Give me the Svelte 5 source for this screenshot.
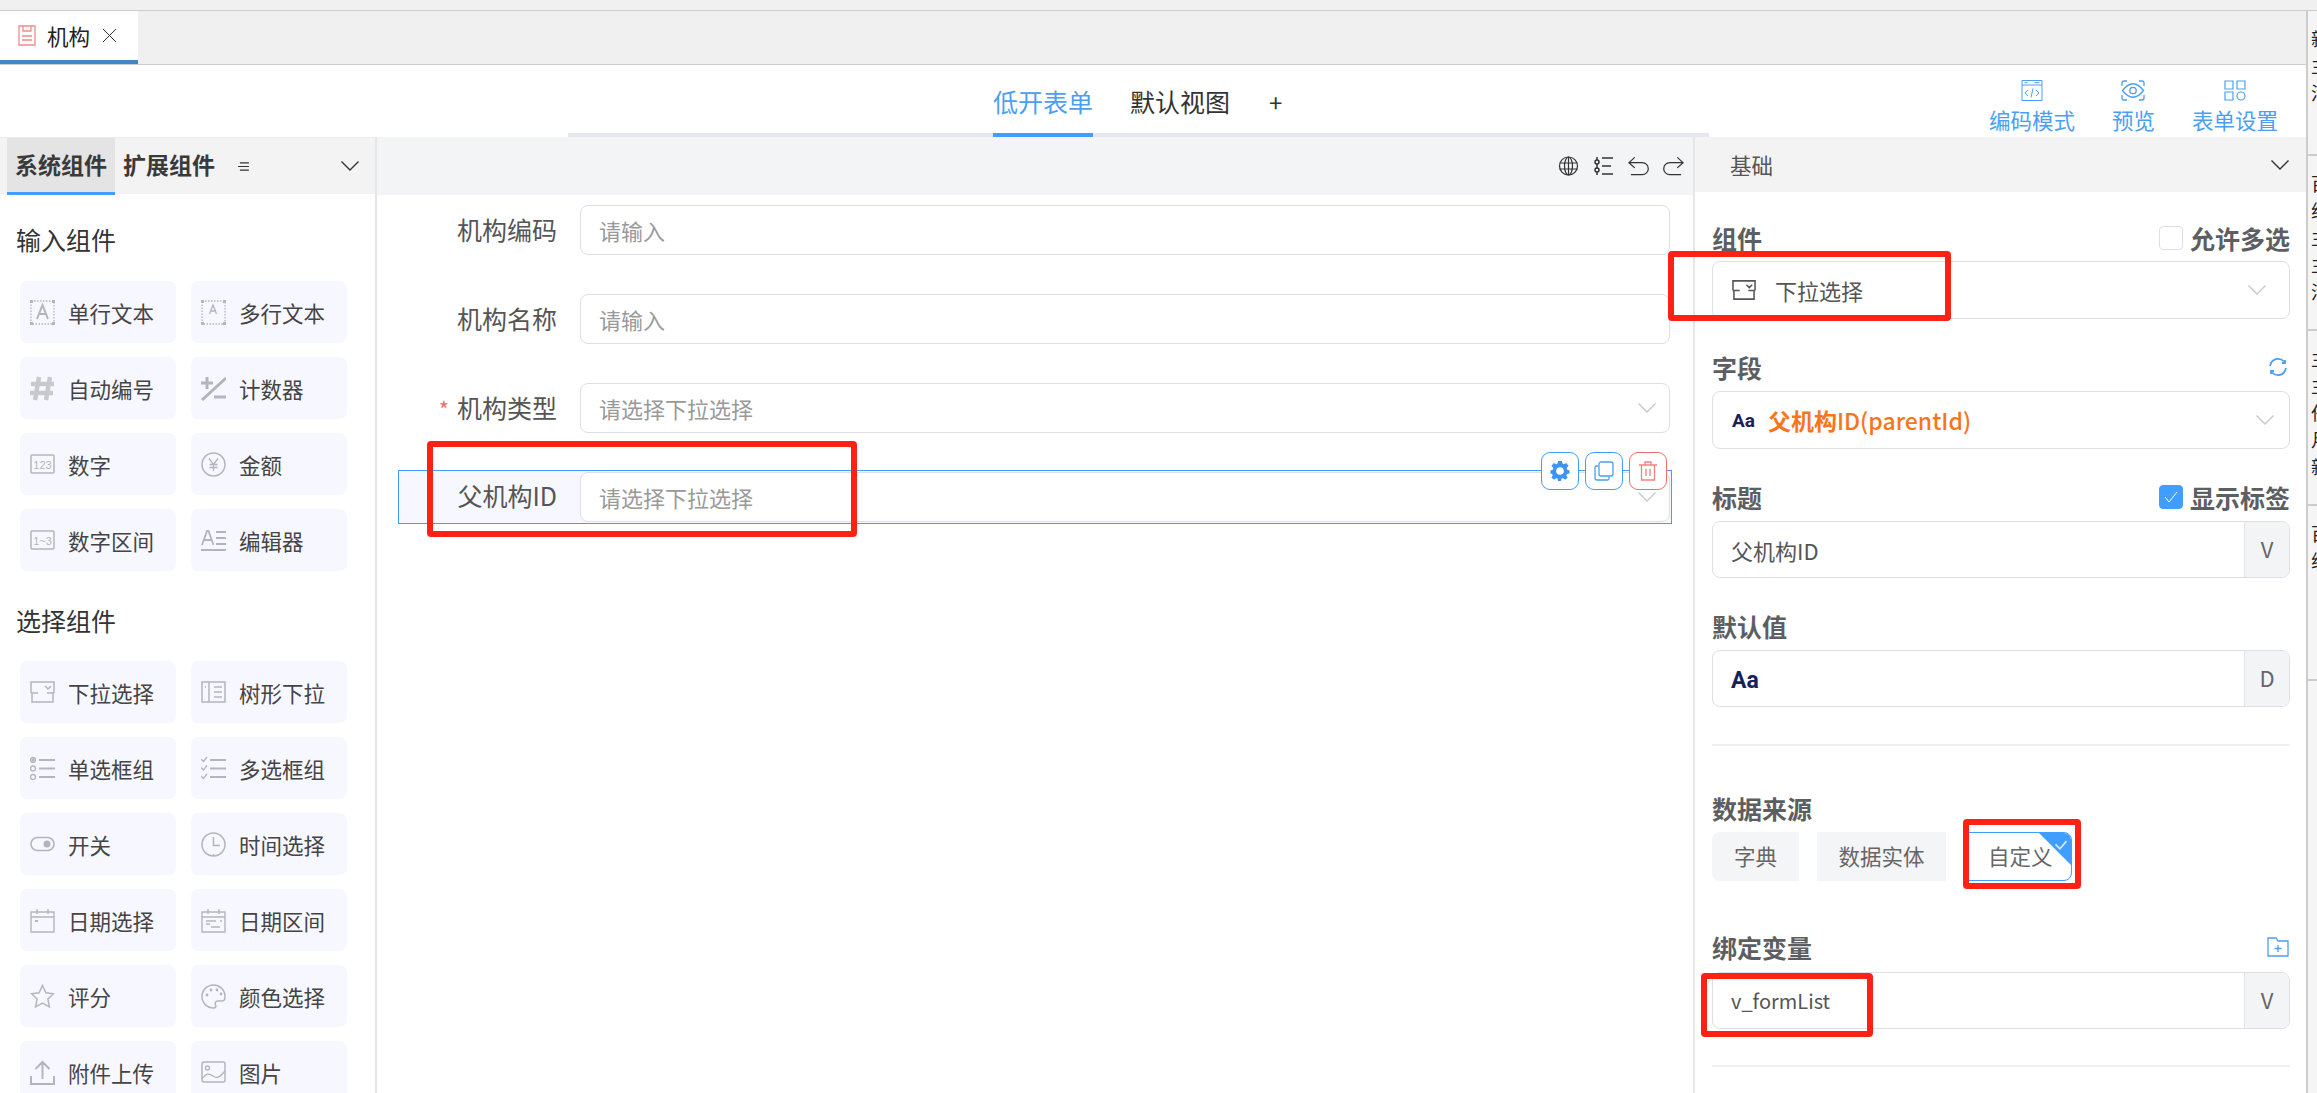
<script>
  const inputComps = [
    ['单行文本', 'text'], ['多行文本', 'textarea'], ['自动编号', 'hash'], ['计数器', 'counter'],
    ['数字', 'num'], ['金额', 'yen'], ['数字区间', 'range'], ['编辑器', 'editor']
  ];
  const selectComps = [
    ['下拉选择', 'select'], ['树形下拉', 'tree'], ['单选框组', 'radio'], ['多选框组', 'check'],
    ['开关', 'toggle'], ['时间选择', 'clock'], ['日期选择', 'date'], ['日期区间', 'daterange'],
    ['评分', 'star'], ['颜色选择', 'palette'], ['附件上传', 'upload'], ['图片', 'image']
  ];
  const rows = [
    { label: '机构编码', hint: '请输入' },
    { label: '机构名称', hint: '请输入' },
    { label: '机构类型', hint: '请选择下拉选择', required: true, arrow: true },
    { label: '父机构ID', hint: '请选择下拉选择', arrow: true, active: true }
  ];
  const stripCells = [
    ['新', '主', '活'],
    ['百', '组', '主', '主', '活'],
    ['主', '主', '任', '月', '新'],
    ['百', '组']
  ];
</script>

{#snippet chevron(cls)}
  <svg class={cls} viewBox="0 0 20 12" fill="none" stroke="currentColor" stroke-width="1.4"><path d="M1.5 1.5 10 10l8.500-8.500" /></svg>
{/snippet}

{#snippet compIcon(name)}
  <svg class="comp-icon" viewBox="0 0 25 25" fill="none" stroke="#b4b5ba" stroke-width="1.3">
    {#if name === 'text' || name === 'textarea'}
      <rect x="1" y="1" width="23" height="23" stroke-dasharray="1.500 1.500" />
      <path d="M0 0h3v3H0zM22 0h3v3h-3zM0 22h3v3H0zM22 22h3v3h-3z" fill="#b4b5ba" stroke="none" />
      {#if name === 'text'}
        <path d="M7 19 12.500 5 18 19M9 14h7" stroke-width="2" />
      {:else}
        <path d="M8.500 14 12 5l3.500 9M10 11h5" />
      {/if}
    {:else if name === 'hash'}
      <path d="M9 1 5 24M20 1l-4 23M1 8h23M0 17h23" stroke="#c8c9cd" stroke-width="4.500" />
    {:else if name === 'counter'}
      <path d="M0 7h12M6 1v12M1 24 25 2M13 21h12" stroke="#b4b5ba" stroke-width="3" />
    {:else if name === 'num' || name === 'range'}
      <rect x="1" y="3" width="23" height="18" rx="1" stroke-width="1.500" />
      <text x="12.500" y="16.500" text-anchor="middle" class="icon-label" stroke="none" fill="#b4b5ba">{name === 'num' ? '123' : '1~3'}</text>
    {:else if name === 'yen'}
      <circle cx="12.500" cy="12.500" r="11.500" stroke-width="1.500" />
      <path d="M8 6.500l4.500 6 4.500-6M12.500 12.500V19M8.500 12.500h8M8.500 15.500h8" />
    {:else if name === 'editor'}
      <path d="M1 17 6 3h1.500l5 14M3 12h8" stroke-width="1.800" />
      <path d="M15 4h10M15 10h10M15 16h10M0 22h25" stroke-width="2" />
    {:else if name === 'select'}
      <path d="M1 13V2h23v11M1 13h7M17 13h7M2 13v9h21v-9M15 6l3 3 3-3" stroke-width="1.500" />
    {:else if name === 'tree'}
      <rect x="1" y="2" width="23" height="20" stroke-width="1.500" />
      <path d="M8 2v20M13 7h8M13 12h8M13 17h8M4 7h1" stroke-width="1.500" />
    {:else if name === 'radio'}
      <circle cx="3" cy="4" r="2.500" /><circle cx="3" cy="12.500" r="2.500" /><circle cx="3" cy="21" r="2.500" />
      <circle cx="3" cy="4" r="1" fill="#b4b5ba" />
      <path d="M9 4h16M9 12.500h16M9 21h16" stroke-width="1.800" />
    {:else if name === 'check'}
      <path d="M0 3l2.500 2.500L6 1M0 11.500 2.500 14 6 9.500M0 20l2.500 2.500L6 18" />
      <path d="M9 4h16M9 12.500h16M9 21h16" stroke-width="1.800" />
    {:else if name === 'toggle'}
      <rect x="1" y="5.500" width="23" height="13" rx="6.500" stroke-width="1.600" />
      <circle cx="17" cy="12" r="3.500" fill="#b4b5ba" stroke="none" />
    {:else if name === 'clock'}
      <circle cx="12.500" cy="12.500" r="11.500" stroke-width="1.500" />
      <path d="M12.500 5v8.500H19M12.500 22v2M1 12.500h1" stroke-width="1.500" />
    {:else if name === 'date' || name === 'daterange'}
      <path d="M1 4h23v20H1zM1 9h23M7 1v5M18 1v5" stroke-width="1.400" />
      {#if name === 'date'}
        <path d="M5 13h3" stroke-width="2" />
      {:else}
        <path d="M5 13h10M10 19h9M5 16h4M19 13h2" />
      {/if}
    {:else if name === 'star'}
      <path d="M12.500 1.500l3.400 7.200 7.600 1-5.600 5.300 1.500 7.800-6.900-3.800-6.900 3.800 1.500-7.800L1.500 9.700l7.600-1z" stroke-width="1.500" />
    {:else if name === 'palette'}
      <path d="M12.500 1a11.500 11.500 0 1 0 0 23c2.500 0 2.800-1.800 2-3.200-1-1.800.2-3.800 2.300-3.800H21c2 0 3-1.500 3-4.500C24 5.500 18.500 1 12.500 1z" stroke-width="1.500" />
      <circle cx="6" cy="11" r="1.400" fill="#b4b5ba" stroke="none" /><circle cx="10" cy="6" r="1.400" fill="#b4b5ba" stroke="none" />
      <circle cx="16" cy="6" r="1.400" fill="#b4b5ba" stroke="none" /><circle cx="20" cy="10" r="1.400" fill="#b4b5ba" stroke="none" />
    {:else if name === 'upload'}
      <path d="M12.500 19V2M5.500 9l7-7 7 7M1 16v8h23v-8" stroke-width="2" />
    {:else if name === 'image'}
      <rect x="1" y="2" width="23" height="20" rx="2" stroke-width="1.500" />
      <circle cx="6.500" cy="8" r="2" /><path d="M1 19c4-6 7-6 11-3s7 1 12-5" />
    {/if}
  </svg>
{/snippet}

{#snippet compGrid(items)}
  <div class="comp-grid">
    {#each items as [name, icon]}
      <div class="comp-card">
        {@render compIcon(icon)}
        <span>{name}</span>
      </div>
    {/each}
  </div>
{/snippet}

<div class="page">
  <div class="top-strip"></div>
  <div class="app-row">
    <div class="main">
      <div class="tabbar">
        <div class="doc-tab">
          <svg class="doc-icon" viewBox="0 0 18 21" fill="none" stroke="#f28b8b" stroke-width="1.300"><path d="M1 1h16v19H1zM5 1v5h8V1M4 11h10M4 15h10" /></svg>
          <span>机构</span>
          <svg class="close" viewBox="0 0 15 15" fill="none" stroke="#333" stroke-width="1"><path d="M1 1l13 13M14 1 1 14" /></svg>
        </div>
      </div>

      <header class="header">
        <div class="views">
          <span class="view active">低开表单</span>
          <span class="view">默认视图</span>
          <span class="plus">+</span>
        </div>
        <div class="actions">
          <div class="action">
            <svg viewBox="0 0 21 21" fill="none" stroke="#4a9ff5" stroke-width="1"><path d="M.5.500h20v20H.500zM.5 5h20M3 2.700h3M13 2.700h5" /><path d="M6.500 10 3.500 13l3 3M14.500 10l3 3-3 3M11.500 8.500l-2 9" /></svg>
            <span>编码模式</span>
          </div>
          <div class="action">
            <svg viewBox="0 0 24 21" fill="none" stroke="#4a9ff5" stroke-width="1.300"><path d="M1 6V3q0-2 2-2h3M18 1h3q2 0 2 2v3M1 15v3q0 2 2 2h3M18 20h3q2 0 2-2v-3" /><path d="M1.500 10.500Q12-3 22.500 10.500 12 24 1.500 10.500z" /><circle cx="12" cy="10.500" r="3.200" /></svg>
            <span>预览</span>
          </div>
          <div class="action">
            <svg viewBox="0 0 22 21" fill="none" stroke="#4a9ff5" stroke-width="1.200"><path d="M1 1h8v8H1zM13 1h8v8h-8zM1 12h8v8H1z" /><circle cx="17" cy="16" r="4" /></svg>
            <span>表单设置</span>
          </div>
        </div>
      </header>

      <div class="body">
        <aside class="left">
          <div class="left-head">
            <span class="left-tab active">系统组件</span>
            <span class="left-tab">扩展组件</span>
            <svg class="menu" viewBox="0 0 12 10" fill="none" stroke="#333" stroke-width="1.300"><path d="M2 1h10M0 5h12M2 9h10" /></svg>
            {@render chevron('chev dark')}
          </div>
          <div class="left-body">
            <h3>输入组件</h3>
            {@render compGrid(inputComps)}
            <h3 class="second">选择组件</h3>
            {@render compGrid(selectComps)}
          </div>
        </aside>

        <section class="center">
          <div class="toolbar">
            <svg viewBox="0 0 20 20" fill="none" stroke="#333" stroke-width="1.200"><circle cx="10" cy="10" r="9" /><ellipse cx="10" cy="10" rx="4" ry="9" /><path d="M10 1v18M1 7h18M1 13h18" /></svg>
            <svg viewBox="0 0 21 20" fill="none" stroke="#333" stroke-width="1.500"><path d="M4 1v18M9 2h11M9 10h9M9 18h11" /><circle cx="4" cy="6" r="2" fill="#f3f4f5" /><circle cx="4" cy="14" r="2" fill="#f3f4f5" /></svg>
            <svg viewBox="0 0 22 20" fill="none" stroke="#333" stroke-width="1.300"><path d="M7 1 1 6.500 7 12M1 6.500h14a6 6 0 0 1 0 12.500H3" /></svg>
            <svg viewBox="0 0 22 20" fill="none" stroke="#333" stroke-width="1.300"><path d="M15 1l6 5.500-6 5.500M21 6.500H7a6 6 0 0 0 0 12.500h12" /></svg>
          </div>
          <div class="form">
            {#each rows as row}
              <div class="form-row" class:active={row.active}>
                <div class="form-label">
                  {#if row.required}<i>*</i>{/if}{row.label}
                </div>
                <div class="field">
                  <span>{row.hint}</span>
                  {#if row.arrow}{@render chevron('chev')}{/if}
                </div>
                {#if row.active}
                  <div class="row-tools">
                    <button aria-label="设置"><svg viewBox="0 0 20 21"><path fill="#3f93f2" fill-rule="evenodd" d="M8 0h4l.6 2.700 1.500.7L16.600 2l2.400 3.200-1.900 2 .3 1.600L20 10v3l-2.600.7-.7 1.500 1.400 2.300-2.800 2.300-2-1.800-1.600.5L11 21H8l-.6-2.500-1.600-.5-2 1.800L1 17.500l1.400-2.300-.7-1.500L0 13v-3l2.600-1.200.3-1.600-1.900-2L3.400 2l2.500 1.400 1.500-.7zM10 6.500a4 4 0 1 0 0 8 4 4 0 0 0 0-8z" /></svg></button>
                    <button aria-label="复制"><svg viewBox="0 0 20 20" fill="none" stroke="#4a9ff5" stroke-width="1.300"><rect x="5" y="1" width="14" height="14" rx="2" /><path d="M4 5H2.500Q1 5 1 6.500V17q0 2 2 2h10.500q1.500 0 1.500-1.500V16" /></svg></button>
                    <button class="danger" aria-label="删除"><svg viewBox="0 0 20 20" fill="none" stroke="#f28080" stroke-width="1.300"><path d="M1 4h18M7 4V1h6v3M3.500 4v15h13V4M8 8v7M12 8v7" /></svg></button>
                  </div>
                {/if}
              </div>
            {/each}
          </div>
        </section>

        <aside class="right">
          <div class="right-head">
            <span>基础</span>
            {@render chevron('chev dark')}
          </div>
          <div class="props">
            <div class="prop-title first">
              <b>组件</b>
              <label class="check"><span class="box"></span><b>允许多选</b></label>
            </div>
            <div class="field big roomy">
              <svg class="sel-icon" viewBox="0 0 25 25" fill="none" stroke="#555" stroke-width="1.600"><path d="M1 13V3h23v10M1 13h7M17 13h7M2 13v9h21v-9M15 7l3 3 3-3" /></svg>
              <span class="val">下拉选择</span>
              {@render chevron('chev')}
            </div>

            <div class="prop-title">
              <b>字段</b>
              <svg class="small-icon" viewBox="0 0 20 20" fill="none" stroke="#4a9ff5" stroke-width="1.800"><path d="M16 4.500A8 8 0 0 0 3 6l-1 3M4 15.500A8 8 0 0 0 17 14l1-3M14 6h3V3M6 14H3v3" /></svg>
            </div>
            <div class="field big">
              <span class="aa">Aa</span>
              <span class="orange"><b>父机构</b>ID(parentId)</span>
              {@render chevron('chev')}
            </div>

            <div class="prop-title">
              <b>标题</b>
              <label class="check"><span class="box on"><svg viewBox="0 0 14 12" fill="none" stroke="#fff" stroke-width="1"><path d="M1 6l4 5 8-10" /></svg></span><b>显示标签</b></label>
            </div>
            <div class="group">
              <span class="val">父机构ID</span>
              <span class="suffix">V</span>
            </div>

            <div class="prop-title">
              <b>默认值</b>
            </div>
            <div class="group">
              <span class="aa large">Aa</span>
              <span class="suffix">D</span>
            </div>
            <hr />

            <div class="prop-title source">
              <b>数据来源</b>
            </div>
            <div class="choices">
              <span class="choice">字典</span>
              <span class="choice wide">数据实体</span>
              <span class="choice on">自定义<em></em><svg viewBox="0 0 12 10" fill="none" stroke="#d5e9ff" stroke-width="1.500"><path d="M1 4l4 4 6-7" /></svg></span>
            </div>

            <div class="prop-title bind">
              <b>绑定变量</b>
              <svg class="small-icon folder" viewBox="0 0 22 20" fill="none" stroke="#4a9ff5" stroke-width="1.300"><path d="M1 1h8l2 3h10v15H1zM11 8v7M7.500 11.500h7" /></svg>
            </div>
            <div class="group">
              <span class="val latin">v_formList</span>
              <span class="suffix">V</span>
            </div>
            <hr class="last" />
          </div>
        </aside>
      </div>
    </div>

    <div class="side-strip">
      {#each stripCells as cell}
        <div class="strip-cell">
          {#each cell as ch}<span>{ch}</span>{/each}
        </div>
      {/each}
    </div>
  </div>

  <div class="mark m1"></div>
  <div class="mark m2"></div>
  <div class="mark m3"></div>
  <div class="mark m4"></div>
</div>

<style>
  :global(body) {
    margin: 0;
    background: #fff;
    font-family: "Noto Sans CJK SC", "Noto Sans", sans-serif;
    overflow: hidden;
  }

  .page {
    position: relative;
    width: 2317px;
    height: 1093px;
    overflow: hidden;
    color: #333;
  }

  .top-strip {
    height: 11px;
    box-sizing: border-box;
    background: #f0f0f0;
    border-bottom: 1px solid #ccc;
  }

  .app-row {
    display: flex;
    height: 1082px;
  }

  .main {
    width: 2306px;
    flex: none;
    display: flex;
    flex-direction: column;
  }

  .tabbar {
    height: 54px;
    box-sizing: border-box;
    background: #f0f0f0;
    border-bottom: 1px solid #ccc;
    flex: none;
  }

  .doc-tab {
    width: 138px;
    height: 53px;
    box-sizing: border-box;
    background: #fff;
    border-bottom: 4px solid #4285c9;
    display: flex;
    align-items: center;
    padding-left: 18px;
    font-size: 21.500px;
    color: #222;
  }

  .doc-icon {
    width: 18px;
    height: 21px;
    margin-right: 11px;
  }

  .close {
    width: 15px;
    height: 15px;
    margin-left: 12px;
  }

  .header {
    height: 72px;
    flex: none;
    position: relative;
    display: flex;
    box-sizing: border-box;
    padding-left: 568px;
  }

  .views {
    width: 1141px;
    height: 72px;
    box-sizing: border-box;
    border-bottom: 4px solid #e4e7ed;
    display: flex;
    padding-left: 425px;
  }

  .view {
    height: 72px;
    box-sizing: border-box;
    margin-right: 37px;
    font-size: 25px;
    line-height: 72px;
    color: #333;
  }

  .view.active {
    color: #4a9ff5;
    border-bottom: 4px solid #409eff;
  }

  .plus {
    font-size: 24px;
    line-height: 74px;
    margin-left: 2px;
  }

  .actions {
    position: absolute;
    right: 28px;
    top: 15px;
    display: flex;
    gap: 37px;
    color: #4a9ff5;
    font-size: 21.500px;
    line-height: 25px;
  }

  .action {
    display: flex;
    flex-direction: column;
    align-items: center;
    gap: 6px;
  }

  .action svg {
    height: 21px;
    width: 24px;
  }

  .body {
    flex: 1;
    display: flex;
    min-height: 0;
  }

  .left {
    width: 377px;
    flex: none;
    box-sizing: border-box;
    border-right: 2px solid #e6e6e6;
    overflow: hidden;
  }

  .left-head {
    height: 57px;
    background: #f3f3f3;
    display: flex;
    align-items: flex-start;
    padding-left: 7px;
    font-size: 23px;
    font-weight: 700;
    border-top: 1px solid #efeaea;
    box-sizing: border-box;
  }

  .left-tab {
    width: 108px;
    height: 57px;
    box-sizing: border-box;
    line-height: 53px;
    text-align: center;
    color: #3a3a3a;
  }

  .left-tab.active {
    background: #e4e4e4;
    border-bottom: 3px solid #409eff;
  }

  .menu {
    width: 11px;
    height: 9px;
    margin: 24px 0 0 15px;
  }

  .chev {
    width: 20px;
    height: 12px;
    flex: none;
    color: #c5c8ce;
  }

  .chev.dark {
    color: #333;
  }

  .left-head .chev {
    margin: 22px 0 0 91px;
  }

  .left-body {
    padding: 25px 0 0 16px;
  }

  h3 {
    margin: 0 0 22px;
    font-size: 25px;
    font-weight: 400;
    line-height: 40px;
    color: #333;
  }

  h3.second {
    margin: 29px 0 21px;
  }

  .comp-grid {
    display: grid;
    grid-template-columns: 156px 156px;
    grid-auto-rows: 62px;
    gap: 14px 15px;
    margin-left: 4px;
  }

  .comp-card {
    background: #f7f8ff;
    border-radius: 7px;
    display: flex;
    align-items: center;
    padding-left: 10px;
    font-size: 21.500px;
    color: #444;
  }

  .comp-icon {
    width: 25px;
    height: 25px;
    flex: none;
    margin-right: 13px;
  }

  .icon-label {
    font-family: "Liberation Sans", sans-serif;
    font-size: 11px;
  }

  .center {
    flex: 1;
    min-width: 0;
    border-right: 2px solid #e6e6e6;
  }

  .toolbar {
    height: 58px;
    background: #f3f4f5;
    display: flex;
    align-items: center;
    justify-content: flex-end;
    gap: 14px;
    padding-right: 9px;
  }

  .toolbar svg {
    width: 21px;
    height: 20px;
  }

  .form {
    padding: 10px 23px 0 21px;
  }

  .form-row {
    position: relative;
    display: flex;
    height: 50px;
    margin-bottom: 39px;
    align-items: stretch;
  }

  .form-row.active {
    height: 54px;
    margin: -2px -2px 0 0;
    border: 1px solid #409eff;
    background: #f6f7ff;
    box-sizing: border-box;
  }

  .form-label {
    width: 182px;
    padding-right: 23px;
    box-sizing: border-box;
    text-align: right;
    font-size: 25px;
    line-height: 48px;
    color: #555;
    flex: none;
  }

  .form-label i {
    color: #f56c6c;
    font-style: normal;
    font-size: 22px;
    margin-right: 8px;
  }

  .form-row.active .form-label {
    width: 181px;
  }

  .field {
    flex: 1;
    background: #fff;
    border: 1.500px solid #dcdfe6;
    border-radius: 8px;
    display: flex;
    align-items: center;
    justify-content: space-between;
    padding: 0 12px 0 18px;
    font-size: 22px;
    color: #999;
    box-sizing: border-box;
  }

  .form-row.active .field {
    margin: 1px 1px 1px 0;
  }

  .row-tools {
    position: absolute;
    right: 4px;
    top: -19px;
    display: flex;
    gap: 6px;
  }

  .row-tools button {
    width: 38px;
    height: 38px;
    padding: 0;
    background: #fff;
    border: 1px solid #409eff;
    border-radius: 9px;
    display: flex;
    align-items: center;
    justify-content: center;
  }

  .row-tools button.danger {
    border-color: #f56c6c;
  }

  .row-tools svg {
    width: 20px;
    height: 20px;
  }

  .right {
    width: 611px;
    flex: none;
    overflow: hidden;
  }

  .right-head {
    height: 55px;
    background: #f3f3f3;
    display: flex;
    align-items: center;
    justify-content: space-between;
    padding: 0 16px 0 35px;
    font-size: 21.500px;
    color: #555;
  }

  .props {
    padding: 0 16px 0 17px;
  }

  .prop-title {
    display: flex;
    justify-content: space-between;
    align-items: center;
    height: 36px;
    margin: 30px 0 6px;
    font-size: 25px;
    color: #5d5e61;
  }

  .prop-title.first {
    margin-top: 28px;
    margin-bottom: 5px;
  }

  .prop-title.source {
    margin: 44px 0 6px;
  }

  .prop-title.bind {
    margin: 48px 0 7px;
  }

  .check {
    display: flex;
    align-items: center;
    gap: 7px;
  }

  .box {
    width: 24px;
    height: 24px;
    box-sizing: border-box;
    border: 1.500px solid #dcdfe6;
    border-radius: 4px;
    background: #fff;
    display: flex;
    align-items: center;
    justify-content: center;
  }

  .box.on {
    background: #409eff;
    border-color: #409eff;
  }

  .box svg {
    width: 14px;
    height: 12px;
  }

  .small-icon {
    width: 20px;
    height: 20px;
    margin-right: 2px;
  }

  .small-icon.folder {
    width: 22px;
    margin-right: 1px;
  }

  .field.big {
    flex: none;
    height: 58px;
    padding: 0 14px 0 19px;
    justify-content: flex-start;
    font-size: 22px;
  }

  .field.big.roomy {
    padding-right: 22px;
  }

  .field.big .chev {
    margin-left: auto;
  }

  .sel-icon {
    width: 24px;
    height: 24px;
    margin-right: 19px;
  }

  .val {
    color: #555;
    font-size: 22px;
  }

  .val.latin {
    font-size: 20px;
  }

  .aa {
    font-family: "Roboto", sans-serif;
    font-weight: 700;
    color: #16215e;
    font-size: 19px;
    margin-right: 13px;
  }

  .aa.large {
    font-size: 23px;
    margin-top: 3px;
  }

  .orange {
    color: #f7761a;
    font-size: 23px;
    font-weight: 500;
  }

  .group {
    height: 57px;
    box-sizing: border-box;
    border: 1.500px solid #dcdfe6;
    border-radius: 8px;
    display: flex;
    align-items: center;
    justify-content: space-between;
    padding-left: 18px;
    overflow: hidden;
  }

  .suffix {
    width: 44px;
    height: 100%;
    background: #f3f4f5;
    border-left: 1.500px solid #e3e5ea;
    color: #666;
    font-size: 22px;
    text-align: center;
    line-height: 52px;
  }

  hr {
    border: none;
    height: 2px;
    background: #eef0f3;
    margin: 37px 0 0;
  }

  hr.last {
    margin-top: 36px;
  }

  .choices {
    display: flex;
    gap: 18px;
    height: 49px;
    font-size: 21.500px;
    color: #666;
  }

  .choice {
    position: relative;
    width: 87px;
    background: #f4f5f7;
    border-radius: 8px 0 0 8px;
    text-align: center;
    line-height: 48px;
  }

  .choice.wide {
    width: 129px;
    border-radius: 0;
  }

  .choice.on {
    width: 105px;
    margin-left: 3px;
    box-sizing: border-box;
    background: #fff;
    border: 1px solid #409eff;
    border-radius: 0 8px 8px 0;
    text-align: left;
    padding-left: 20px;
    line-height: 46px;
    overflow: hidden;
  }

  .choice em {
    position: absolute;
    top: 0;
    right: 0;
    width: 0;
    height: 0;
    border-top: 32px solid #409eff;
    border-left: 32px solid transparent;
  }

  .choice svg {
    position: absolute;
    top: 7px;
    right: 3px;
    width: 14px;
    height: 11px;
  }

  .mark {
    position: absolute;
    box-sizing: border-box;
    border: 6px solid #ff2114;
    border-radius: 4px;
  }

  .m1 { left: 1668px; top: 251px; width: 283px; height: 70px; }
  .m2 { left: 427px; top: 441px; width: 430px; height: 96px; }
  .m3 { left: 1963px; top: 819px; width: 118px; height: 70px; }
  .m4 { left: 1701px; top: 973px; width: 172px; height: 64px; }

  .side-strip {
    flex: 1;
    box-sizing: border-box;
    border-left: 2px solid #ccc;
    background: #f5f5f5;
    overflow: hidden;
    font-size: 18px;
    color: #222;
  }

  .strip-cell {
    height: 175px;
    padding: 14px 0 0 3px;
    box-sizing: border-box;
    border-bottom: 2px solid #ccc;
    display: flex;
    flex-direction: column;
  }

  .strip-cell:first-child {
    height: 145px;
  }

  .strip-cell span {
    height: 27px;
    line-height: 27px;
    white-space: nowrap;
  }
</style>
